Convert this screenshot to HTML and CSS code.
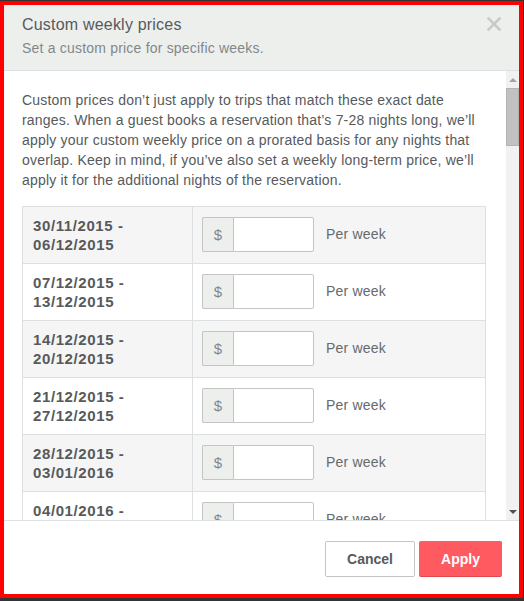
FILE: index.html
```html
<!DOCTYPE html>
<html lang="en">
<head>
<meta charset="utf-8">
<title>Custom weekly prices</title>
<link rel="stylesheet" href="styles.css">
</head>
<body>
<div class="frame">
  <div class="modal">
    <header class="head">
      <div class="titles">
        <div class="title">Custom weekly prices</div>
        <div class="sub">Set a custom price for specific weeks.</div>
      </div>
      <button class="close" aria-label="Close">
        <svg width="14" height="14" viewBox="0 0 14 14"><path d="M1.5 1.5 L12.5 12.5 M12.5 1.5 L1.5 12.5" stroke="#c8cacb" stroke-width="2.6" stroke-linecap="square" fill="none"/></svg>
      </button>
    </header>
    <div class="body">
      <div class="scroll">
        <p class="intro">Custom prices don’t just apply to trips that match these exact date ranges. When a guest books a reservation that’s 7-28 nights long, we’ll apply your custom weekly price on a prorated basis for any nights that overlap. Keep in mind, if you’ve also set a weekly long-term price, we’ll apply it for the additional nights of the reservation.</p>
        <table class="weeks">
          <tr><td class="range">30/11/2015 -<br>06/12/2015</td><td class="price"><div class="row"><div class="group"><span class="addon">$</span><input class="field" type="text"></div><span class="per">Per week</span></div></td></tr>
          <tr><td class="range">07/12/2015 -<br>13/12/2015</td><td class="price"><div class="row"><div class="group"><span class="addon">$</span><input class="field" type="text"></div><span class="per">Per week</span></div></td></tr>
          <tr><td class="range">14/12/2015 -<br>20/12/2015</td><td class="price"><div class="row"><div class="group"><span class="addon">$</span><input class="field" type="text"></div><span class="per">Per week</span></div></td></tr>
          <tr><td class="range">21/12/2015 -<br>27/12/2015</td><td class="price"><div class="row"><div class="group"><span class="addon">$</span><input class="field" type="text"></div><span class="per">Per week</span></div></td></tr>
          <tr><td class="range">28/12/2015 -<br>03/01/2016</td><td class="price"><div class="row"><div class="group"><span class="addon">$</span><input class="field" type="text"></div><span class="per">Per week</span></div></td></tr>
          <tr><td class="range">04/01/2016 -<br>10/01/2016</td><td class="price"><div class="row"><div class="group"><span class="addon">$</span><input class="field" type="text"></div><span class="per">Per week</span></div></td></tr>
        </table>
      </div>
      <div class="scrollbar">
        <span class="sb-btn"><span class="tri up"></span></span>
        <span class="sb-track"><span class="sb-thumb"></span></span>
        <span class="sb-btn"><span class="tri down"></span></span>
      </div>
    </div>
    <footer class="foot">
      <button class="btn cancel">Cancel</button>
      <button class="btn apply">Apply</button>
    </footer>
  </div>
</div>
</body>
</html>
```

FILE: styles.css
```css
* { box-sizing: border-box; }
html, body { margin: 0; padding: 0; }
body {
  background: #333333;
  width: 524px;
  height: 601px;
  overflow: hidden;
  font-family: "Liberation Sans", Arial, sans-serif;
  color: #565a5c;
}
.frame {
  margin: 1px 1px 0 0;
  width: 523px;
  height: 597px;
  border: 4px solid #ff0000;
  background: #ffffff;
}
.modal {
  display: flex;
  flex-direction: column;
  height: 100%;
}
.head {
  display: flex;
  justify-content: space-between;
  align-items: flex-start;
  height: 66px;
  padding: 9px 18px 0 18px;
  background: #edefed;
  border-bottom: 1px solid #dce0e0;
}
.title {
  font-size: 16px;
  line-height: 22px;
  letter-spacing: 0.2px;
  color: #565a5c;
}
.sub {
  margin-top: 2px;
  font-size: 14px;
  line-height: 20px;
  letter-spacing: 0.2px;
  color: #82888a;
}
.close {
  margin: 3px 0 0 0;
  padding: 0;
  border: 0;
  background: none;
  width: 14px;
  height: 14px;
  display: block;
}
.close svg { display: block; }
.body {
  display: flex;
  height: 450px;
  border-bottom: 1px solid #dce0e0;
}
.scroll {
  flex: 1;
  overflow: hidden;
  padding: 19px 20px 0 18px;
}
.intro {
  margin: 0 0 16px 0;
  font-size: 14px;
  line-height: 20px;
  letter-spacing: 0.2px;
  color: #565a5c;
}
.weeks {
  width: 464px;
  border-collapse: collapse;
  border: 1px solid #dce0e0;
}
.weeks tr:nth-child(odd) { background: #f5f5f5; }
.weeks td {
  border: 1px solid #dce0e0;
  padding: 9px 10px;
  vertical-align: middle;
}
.range {
  width: 170px;
  font-weight: bold;
  font-size: 15px;
  line-height: 19px;
  letter-spacing: 0.6px;
  color: #565a5c;
}
.price { padding: 0 9px !important; }
.row {
  display: flex;
  align-items: center;
  gap: 12px;
  margin-top: -1px;
}
.group {
  display: flex;
  height: 35px;
  width: 112px;
}
.addon {
  width: 31px;
  display: flex;
  align-items: center;
  justify-content: center;
  background: #edefed;
  border: 1px solid #c4c4c4;
  border-right: 0;
  border-radius: 2px 0 0 2px;
  font-size: 15px;
  color: #82888a;
}
.field {
  width: 81px;
  height: 35px;
  margin: 0;
  padding: 0 8px;
  border: 1px solid #c4c4c4;
  border-radius: 0 2px 2px 0;
  background: #ffffff;
  outline: none;
}
.per {
  font-size: 14px;
  letter-spacing: 0.2px;
  color: #666a6c;
  margin-top: -2px;
}
.scrollbar {
  width: 13px;
  display: flex;
  flex-direction: column;
  background: #f1f1f1;
}
.sb-btn {
  height: 17px;
  display: flex;
  align-items: center;
  justify-content: center;
}
.tri {
  width: 0;
  height: 0;
  border-left: 4px solid transparent;
  border-right: 4px solid transparent;
}
.tri.up { border-bottom: 4px solid #a3a3a3; }
.tri.down { border-top: 4px solid #505050; }
.sb-track {
  flex: 1;
  display: flex;
  flex-direction: column;
}
.sb-thumb {
  height: 58px;
  background: #c1c1c1;
  border: 1px solid #b4b4b4;
}
.foot {
  display: flex;
  justify-content: flex-end;
  align-items: flex-start;
  gap: 4px;
  padding: 20px 17px 0 0;
  flex: 1;
}
.btn {
  height: 36px;
  padding: 0 21px;
  border-radius: 2px;
  font-family: "Liberation Sans", Arial, sans-serif;
  font-size: 14px;
  font-weight: bold;
  cursor: pointer;
}
.cancel {
  width: 90px;
  background: #ffffff;
  border: 1px solid #c4c4c4;
  color: #565a5c;
}
.apply {
  width: 83px;
  background: #ff5a5f;
  border: 1px solid #ff5a5f;
  border-bottom-color: #e0484d;
  color: #ffffff;
}
```
